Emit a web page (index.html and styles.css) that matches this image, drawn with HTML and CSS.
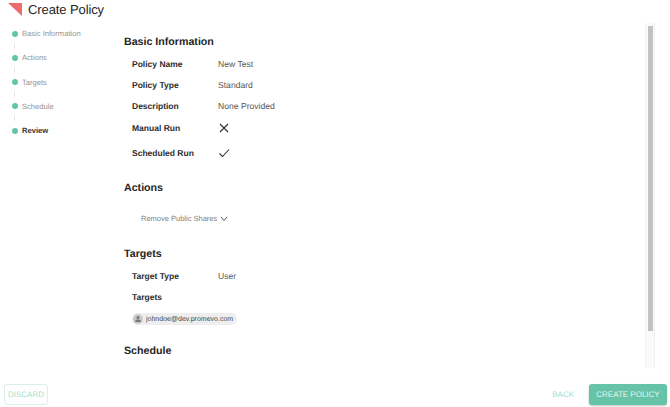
FILE: index.html
```html
<!DOCTYPE html>
<html lang="en">
  <head>
    <meta charset="UTF-8" />
    <title>Create Policy</title>
    <link rel="stylesheet" href="styles.css">
  </head>
  <body>
    <div class="page">
      <header class="header">
        <svg class="logo" width="14" height="13" viewBox="0 0 14 13"><polygon points="0,0 14,0 14,13" fill="#ee6a6a"/></svg>
        <h1>Create Policy</h1>
      </header>
      <div class="content">
        <nav class="steps">
          <div class="step"><span class="dot"></span>Basic Information</div>
          <div class="line"></div>
          <div class="step"><span class="dot"></span>Actions</div>
          <div class="line"></div>
          <div class="step"><span class="dot"></span>Targets</div>
          <div class="line"></div>
          <div class="step"><span class="dot"></span>Schedule</div>
          <div class="line"></div>
          <div class="step active"><span class="dot"></span>Review</div>
        </nav>
        <main class="review">
          <h2>Basic Information</h2>
          <div class="row"><label>Policy Name</label><span>New Test</span></div>
          <div class="row"><label>Policy Type</label><span>Standard</span></div>
          <div class="row"><label>Description</label><span>None Provided</span></div>
          <div class="row"><label>Manual Run</label>
            <svg class="mark" width="12" height="12" viewBox="0 0 12 12"><path d="M2 2 L10 10 M10 2 L2 10" stroke="#333" stroke-width="1.2" fill="none"/></svg>
          </div>
          <div class="row run"><label>Scheduled Run</label>
            <svg class="mark" width="12" height="12" viewBox="0 0 12 12"><path d="M1.5 6.5 L4.5 9.5 L11 2.5" stroke="#333" stroke-width="1.1" fill="none"/></svg>
          </div>
          <h2>Actions</h2>
          <div class="action">Remove Public Shares
            <svg width="8" height="6" viewBox="0 0 8 6"><path d="M1 1 L4 4.5 L7 1" stroke="#555" stroke-width="1" fill="none"/></svg>
          </div>
          <h2>Targets</h2>
          <div class="row"><label>Target Type</label><span>User</span></div>
          <div class="row"><label>Targets</label></div>
          <div class="chip">
            <span class="avatar"><svg width="8" height="8" viewBox="0 0 8 8"><circle cx="4" cy="2.4" r="1.5" fill="#777"/><path d="M1 7 C1 5 2.5 4.6 4 4.6 C5.5 4.6 7 5 7 7 Z" fill="#777"/></svg></span>
            johndoe@dev.promevo.com
          </div>
          <h2>Schedule</h2>
        </main>
        <div class="scrollbar"><div class="thumb"></div></div>
      </div>
      <footer class="footer">
        <button class="discard">DISCARD</button>
        <div class="actions">
          <button class="back">BACK</button>
          <button class="create">CREATE POLICY</button>
        </div>
      </footer>
    </div>
  </body>
</html>
```
FILE: styles.css
```css
* {
  padding: 0;
  margin: 0;
  box-sizing: border-box;
  font-family: "Liberation Sans", Arial, sans-serif;
}
body {
  background-color: white;
  overflow: hidden;
  text-rendering: geometricPrecision;
}
.page {
  width: 670px;
  height: 407px;
  display: flex;
  flex-direction: column;
  opacity: 0.99;
}
.header {
  height: 23px;
  display: flex;
  align-items: flex-start;
  padding-left: 8px;
}
.logo {
  margin-top: 3px;
}
h1 {
  font-size: 13px;
  font-weight: 400;
  letter-spacing: -0.1px;
  color: #222;
  margin-left: 6px;
  line-height: 19px;
}
.content {
  flex: 1;
  display: flex;
  min-height: 0;
}
.steps {
  width: 124px;
  padding: 4.5px 0 0 12px;
  flex-shrink: 0;
}
.step {
  display: flex;
  align-items: center;
  height: 12px;
  font-size: 7.6px;
  color: #949494;
}
.step.active {
  color: #333;
  font-weight: 700;
}
.dot {
  width: 6px;
  height: 6px;
  border-radius: 50%;
  background-color: #62c4a6;
  margin-right: 4px;
}
.line {
  width: 1px;
  height: 12.25px;
  margin-left: 2px;
  background: linear-gradient(white 3px, #e8e8e8 3px, #e8e8e8 9px, white 9px);
}
.review {
  flex: 1;
  overflow: hidden;
}
.scrollbar {
  width: 10px;
  margin-right: 15px;
  padding: 3px 1px 0 2px;
  background-color: #fafafa;
  border-left: 1px solid #f1f1f1;
  border-right: 1px solid #f1f1f1;
}
.thumb {
  height: 305px;
  background-color: #c2c2c2;
}
h2 {
  font-size: 10.65px;
  font-weight: 700;
  color: #222;
  height: 15px;
  line-height: 15px;
  margin: 12px 0 3px;
}
.row {
  display: flex;
  align-items: center;
  height: 21.3px;
  padding-left: 8px;
  font-size: 8.6px;
  color: #555;
}
.row label {
  width: 86px;
  font-size: 8.5px;
  font-weight: 700;
  color: #2b2b2b;
}
.row.run {
  height: 29px;
  margin-bottom: 14px;
}
.action {
  height: 10px;
  display: flex;
  align-items: center;
  gap: 3px;
  font-size: 7.5px;
  color: #808080;
  padding-left: 17px;
  margin: 17.5px 0 23.5px;
}
.chip {
  display: flex;
  align-items: center;
  width: fit-content;
  height: 12px;
  margin: 5.4px 0 19px 8px;
  padding-right: 4px;
  border-radius: 6px;
  background-color: #eeeeee;
  font-size: 7px;
  color: #444;
}
.avatar {
  width: 10px;
  height: 10px;
  border-radius: 50%;
  background-color: #c9c9c9;
  display: flex;
  align-items: center;
  justify-content: center;
  margin: 0 3px 0 1px;
}
.footer {
  height: 39px;
  display: flex;
  justify-content: space-between;
  align-items: flex-end;
  padding: 0 3px 2px 4px;
}
.actions {
  display: flex;
  align-items: center;
  gap: 15px;
}
button {
  font-size: 8px;
  border-radius: 3px;
  border: none;
  background: none;
  color: #a6dfcc;
  text-rendering: geometricPrecision;
}
.discard {
  width: 44px;
  height: 21px;
  border: 1px solid #d8f0e8;
}
.create {
  width: 78px;
  height: 21px;
  background-color: #66c3a6;
  color: #e3f5ef;
  box-shadow: 0 1px 2px rgba(0, 0, 0, 0.25);
}
```
